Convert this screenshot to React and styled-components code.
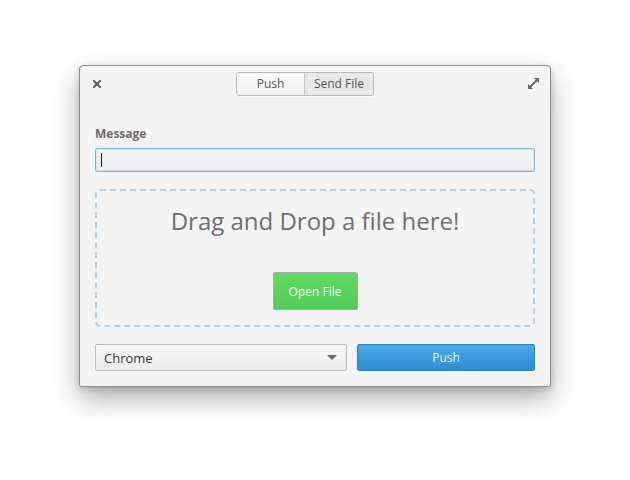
import React from "react";
import styled, { createGlobalStyle } from "styled-components";

const Global = createGlobalStyle`
  html, body {
    margin: 0;
    padding: 0;
    background: #ffffff;
    font-family: "Open Sans", "Noto Sans", sans-serif;
  }
`;

const Page = styled.div`
  width: 630px;
  height: 480px;
  padding: 65px 0 0 79px;
  box-sizing: border-box;
`;

const Window = styled.div`
  width: 472px;
  height: 322px;
  box-sizing: border-box;
  background: #f4f4f4;
  border: 1px solid #8c8c8c;
  border-radius: 4px 4px 2px 2px;
  box-shadow: 0 12px 26px rgba(0, 0, 0, 0.32), 0 2px 6px rgba(0, 0, 0, 0.15);
  display: flex;
  flex-direction: column;
  padding: 0 15px 15px;
`;

const Header = styled.div`
  height: 36px;
  display: flex;
  align-items: center;
  margin: 0 -8px;
`;

const IconButton = styled.div`
  width: 20px;
  height: 20px;
  display: flex;
  align-items: center;
  justify-content: center;
  margin-left: ${(p) => (p.$right ? "auto" : "0")};
`;

const Segmented = styled.div`
  display: flex;
  height: 24px;
  margin-left: 129px;
  border: 1px solid #b9b9b9;
  border-radius: 3px;
  overflow: hidden;
  box-sizing: border-box;
  box-shadow: 0 1px 0 rgba(255, 255, 255, 0.8);
`;

const Segment = styled.div`
  width: ${(p) => p.$w}px;
  display: flex;
  align-items: center;
  justify-content: center;
  font-size: 12px;
  color: #555;
  background: ${(p) =>
    p.$active ? "#e8e8e8" : "linear-gradient(#fafafa, #f0f0f0)"};
  border-left: ${(p) => (p.$first ? "none" : "1px solid #c4c4c4")};
`;

const Body = styled.div`
  flex: 1;
  display: flex;
  flex-direction: column;
  padding-top: 25px;
`;

const Label = styled.div`
  font-size: 12px;
  line-height: 16px;
  font-weight: 700;
  color: #6f6a6a;
  margin-bottom: 6px;
`;

const Input = styled.div`
  height: 24px;
  box-sizing: border-box;
  border: 1px solid #7fb3de;
  border-radius: 2px;
  background: linear-gradient(#f3f3f3, #ededed);
  display: flex;
  align-items: center;
  padding-left: 5px;
  box-shadow: inset 0 0 0 1px rgba(127, 179, 222, 0.25);
`;

const Caret = styled.div`
  width: 1px;
  height: 14px;
  background: #222;
`;

const DropZone = styled.div`
  margin-top: 17px;
  height: 138px;
  box-sizing: border-box;
  border: 2px dashed #aed0ec;
  border-radius: 5px;
  display: flex;
  flex-direction: column;
  align-items: center;
`;

const DropText = styled.div`
  margin-top: 14px;
  font-size: 24px;
  line-height: 32px;
  color: #736d73;
`;

const GreenButton = styled.div`
  margin-top: 35px;
  width: 85px;
  height: 38px;
  box-sizing: border-box;
  border: 1px solid #a9a9a9;
  border-radius: 2px;
  background: linear-gradient(#62d865, #54cc57);
  color: #f4fff4;
  font-size: 12px;
  display: flex;
  align-items: center;
  justify-content: center;
`;

const BottomRow = styled.div`
  margin-top: 17px;
  display: grid;
  grid-template-columns: 252px 178px;
  column-gap: 10px;
  height: 27px;
`;

const Combo = styled.div`
  box-sizing: border-box;
  border: 1px solid #bdbdbd;
  border-radius: 2px;
  background: linear-gradient(#f8f8f8, #ececec);
  display: flex;
  align-items: center;
  justify-content: space-between;
  padding: 0 9px 0 8px;
  font-size: 13px;
  color: #3a3a3a;
`;

const Arrow = styled.div`
  width: 0;
  height: 0;
  border-left: 5px solid transparent;
  border-right: 5px solid transparent;
  border-top: 5px solid #6a6a6a;
`;

const BlueButton = styled.div`
  box-sizing: border-box;
  border: 1px solid #2e7fc2;
  border-radius: 2px;
  background: linear-gradient(#4aa8e6, #318cd3);
  color: #e6f2fc;
  font-size: 12px;
  display: flex;
  align-items: center;
  justify-content: center;
`;

const App = () => {
  return (
    <Page>
      <Global />
      <Window>
        <Header>
          <IconButton>
            <svg width="8" height="8" viewBox="0 0 8 8">
              <path
                d="M1 1 L7 7 M7 1 L1 7"
                stroke="#5e5e5e"
                strokeWidth="2"
                strokeLinecap="square"
              />
            </svg>
          </IconButton>
          <Segmented>
            <Segment $w={67} $first>
              Push
            </Segment>
            <Segment $w={68} $active>
              Send File
            </Segment>
          </Segmented>
          <IconButton $right>
            <svg width="13" height="13" viewBox="0 0 13 13">
              <path d="M7 1 H12 V6 Z" fill="#6a6a6a" />
              <path d="M1 7 V12 H6 Z" fill="#6a6a6a" />
              <path d="M3 10 L10 3" stroke="#6a6a6a" strokeWidth="2" />
            </svg>
          </IconButton>
        </Header>
        <Body>
          <Label>Message</Label>
          <Input>
            <Caret />
          </Input>
          <DropZone>
            <DropText>Drag and Drop a file here!</DropText>
            <GreenButton>Open File</GreenButton>
          </DropZone>
          <BottomRow>
            <Combo>
              Chrome
              <Arrow />
            </Combo>
            <BlueButton>Push</BlueButton>
          </BottomRow>
        </Body>
      </Window>
    </Page>
  );
};

export default App;
